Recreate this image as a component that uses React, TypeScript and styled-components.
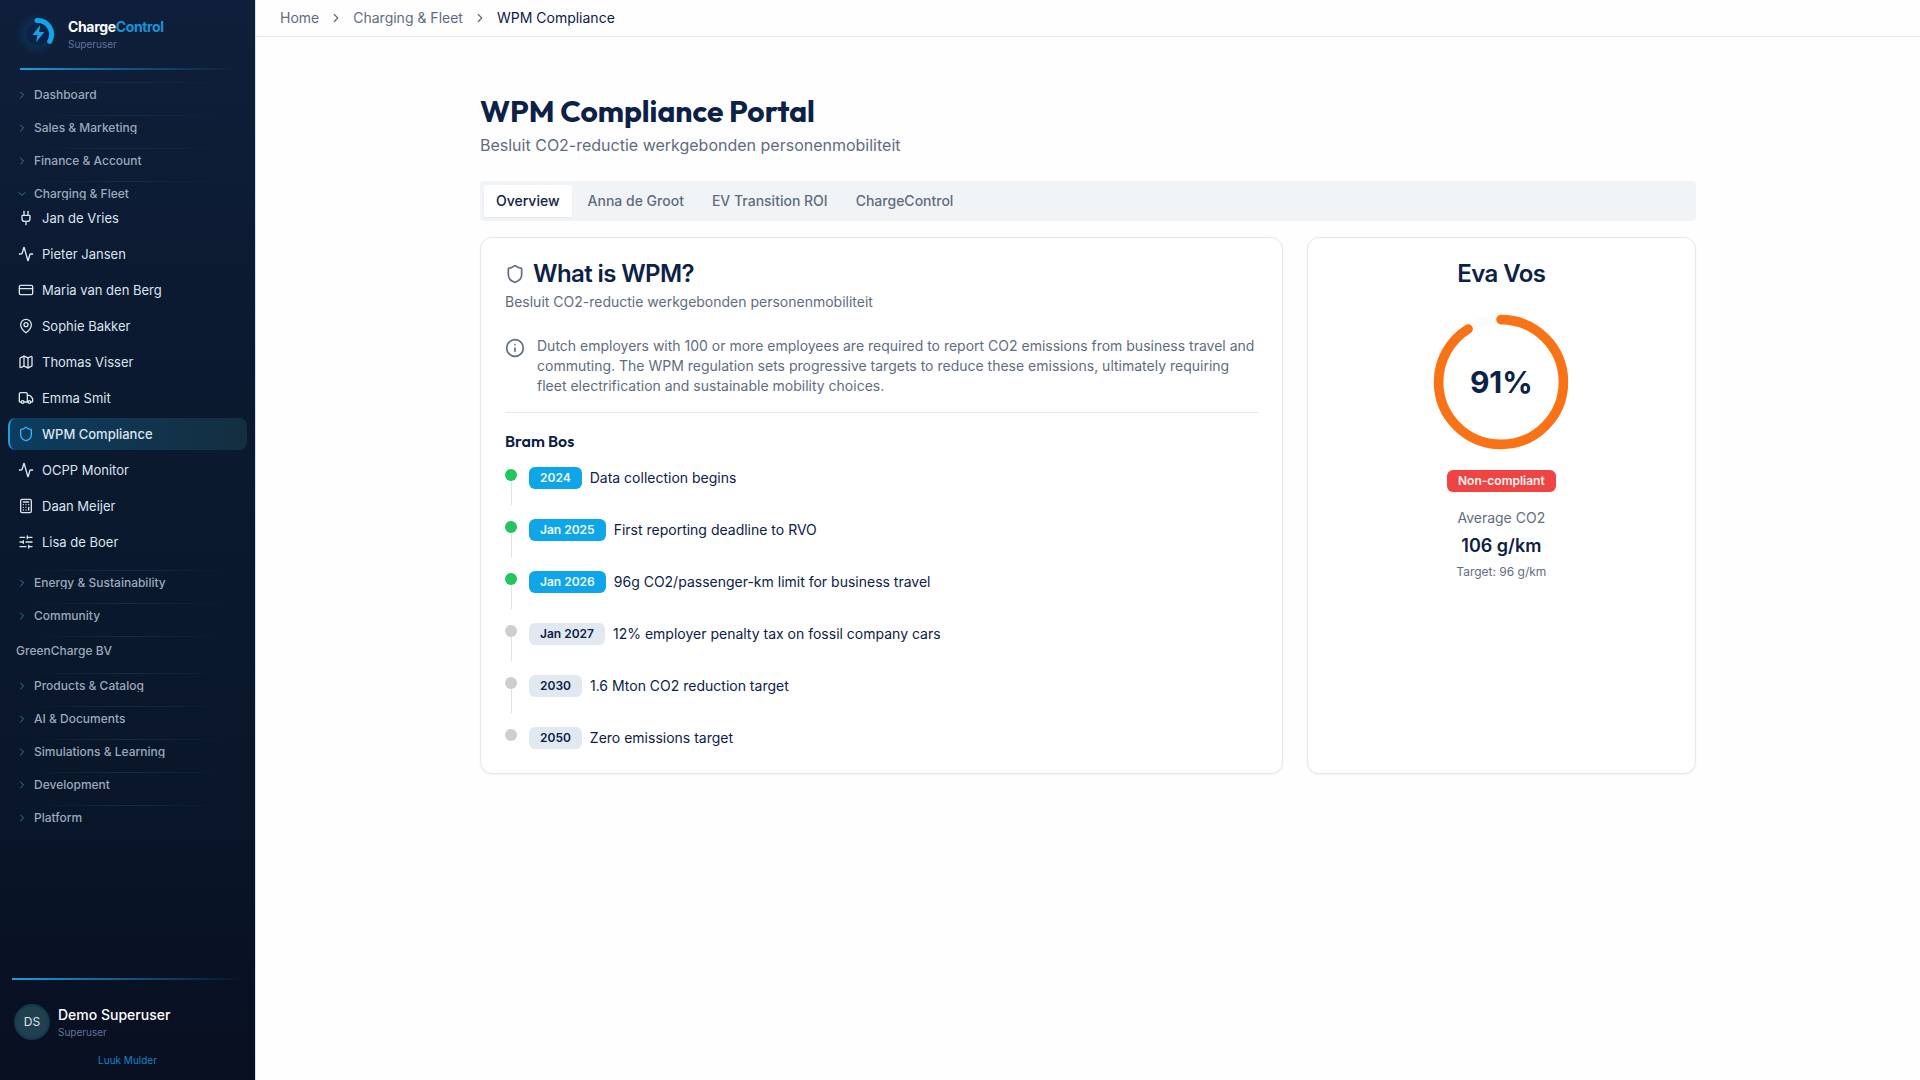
import React from "react";
import styled, { createGlobalStyle, css } from "styled-components";
import {
  Activity,
  Calculator,
  ChevronDown,
  ChevronRight,
  CreditCard,
  Info,
  Map as MapIcon,
  MapPin,
  Plug,
  Shield,
  SlidersHorizontal,
  Truck,
  type LucideIcon,
} from "lucide-react";

const color = {
  ink: "#0c2146",
  muted: "#5f6c80",
  line: "#e3e8ec",
  panel: "#f0f4f7",
  brand: "#0ea5e9",
  green: "#22c55e",
  orange: "#f97316",
  red: "#ef4444",
};

const GlobalStyle = createGlobalStyle`
  *, *::before, *::after { box-sizing: border-box; }
  body {
    margin: 0;
    background: #fefefe;
    color: ${color.ink};
    font-family: Inter, "Liberation Sans", sans-serif;
    font-size: 14px;
    line-height: 20px;
  }
  h1, h2, h3, p, ul, ol { margin: 0; padding: 0; }
  ul, ol { list-style: none; }
  a { color: inherit; text-decoration: none; }
  button { font: inherit; color: inherit; border: 0; background: none; padding: 0; cursor: pointer; }
`;

const headingFont = `Outfit, Lato, sans-serif`;

const Shell = styled.div`
  display: grid;
  grid-template-columns: 256px minmax(0, 1fr);
  min-height: 100vh;
`;

/* Sidebar */

const Sidebar = styled.aside`
  position: sticky;
  top: 0;
  height: 100vh;
  display: flex;
  flex-direction: column;
  background: linear-gradient(180deg, #0f1f3b 0%, #0b1a30 30%, #0a172b 70%, #080f21 100%);
  border-right: 1px solid #d3dfea;
  color: #d5dde8;
`;

const Brand = styled.a`
  display: flex;
  align-items: center;
  gap: 8px;
  height: 68px;
  padding: 0 16px;
`;

const BrandName = styled.span`
  display: block;
  font-size: 14px;
  line-height: 20px;
  font-weight: 700;
  letter-spacing: -0.025em;
  color: #ffffff;

  em { font-style: normal; color: #1793d6; }
`;

const Role = styled.span`
  display: block;
  font-size: 10px;
  line-height: 14px;
  color: #5f7599;
`;

const GlowLine = styled.div<{ $inset: number }>`
  flex: none;
  height: 2px;
  margin: 0 ${(p) => p.$inset}px;
  background: linear-gradient(90deg, #1a9fe0, #14567f 50%, transparent);
`;

const Nav = styled.nav`
  flex: 1;
  min-height: 0;
  overflow: hidden;
  padding: 12px 8px 0;
`;

const Section = styled.section`
  padding-bottom: 12px;

  &::before {
    content: "";
    display: block;
    height: 1px;
    margin: 0 8px 4px;
    background: linear-gradient(90deg, transparent 5%, #132c44 50%, transparent 95%);
  }
`;

const SectionToggle = styled.button`
  display: flex;
  align-items: center;
  gap: 6px;
  width: 100%;
  height: 16px;
  padding: 0 8px;
  font-size: 12px;
  line-height: 12px;
  font-weight: 500;
  color: #9ba9bb;

  svg { flex: none; color: #2a8099; }
  span { overflow: hidden; }
`;

const SectionLabel = styled.p`
  padding: 0 8px;
  font-size: 12px;
  line-height: 20px;
  font-weight: 500;
  color: #9ba9bb;
`;

const ItemList = styled.ul`
  display: grid;
  gap: 4px;
`;

const Item = styled.a<{ $active?: boolean }>`
  display: flex;
  align-items: center;
  gap: 8px;
  height: 32px;
  padding: 0 8px;
  border-left: 2px solid transparent;
  border-radius: 8px;
  font-size: 13px;
  line-height: 21px;
  color: #dbe4ee;

  ${(p) =>
    p.$active &&
    css`
      border-left-color: #1aa0de;
      background: linear-gradient(90deg, #0c3d60, #142e40);
      font-weight: 500;
      svg { color: #38b2f0; }
    `}
`;

const Account = styled.div`
  display: flex;
  align-items: center;
  gap: 8px;
  padding: 24px 14px 0;
`;

const Avatar = styled.span`
  display: grid;
  place-items: center;
  width: 36px;
  height: 36px;
  border: 2px solid #10394f;
  border-radius: 50%;
  background: #21404f;
  font-size: 12px;
  color: #d5e4ee;
`;

const AccountName = styled.span`
  display: block;
  font-size: 14px;
  line-height: 20px;
  font-weight: 500;
  color: #ffffff;
`;

const FooterLink = styled.a`
  display: block;
  padding: 12px 0;
  text-align: center;
  font-size: 10px;
  line-height: 16px;
  color: #1585c4;
`;

/* Page */

const Topbar = styled.nav`
  height: 37px;
  padding: 0 24px;
  border-bottom: 1px solid ${color.line};
  display: flex;
  align-items: center;
`;

const Crumbs = styled.ol`
  display: flex;
  align-items: center;
  gap: 10px;
  color: ${color.muted};

  li { display: flex; align-items: center; gap: 10px; }
  [aria-current] { color: ${color.ink}; }
`;

const Page = styled.main`
  max-width: 1280px;
  margin: 0 auto;
  padding: 56px 32px;
`;

const Title = styled.h1`
  font-family: ${headingFont};
  font-size: 30px;
  line-height: 36px;
  font-weight: 700;
`;

const Lead = styled.p`
  margin-top: 4px;
  font-size: 16px;
  line-height: 24px;
  color: ${color.muted};
`;

const Tabs = styled.div`
  display: flex;
  gap: 4px;
  margin: 24px 0 16px;
  padding: 4px;
  border-radius: 4px;
  background: ${color.panel};
`;

const Tab = styled.button<{ $active?: boolean }>`
  height: 32px;
  padding: 0 12px;
  border-radius: 2px;
  font-weight: 500;
  color: ${(p) => (p.$active ? color.ink : color.muted)};
  background: ${(p) => (p.$active ? "#ffffff" : "transparent")};
  box-shadow: ${(p) => (p.$active ? "0 1px 2px rgba(15, 35, 70, 0.06)" : "none")};
`;

const Columns = styled.div`
  display: grid;
  grid-template-columns: repeat(3, minmax(0, 1fr));
  gap: 24px;
`;

const Card = styled.section<{ $span?: number; $centered?: boolean }>`
  grid-column: span ${(p) => p.$span ?? 1};
  padding: 24px;
  border: 1px solid ${color.line};
  border-radius: 12px;
  background: #ffffff;
  box-shadow: 0 1px 2px rgba(15, 35, 70, 0.06);
  ${(p) =>
    p.$centered &&
    css`
      display: flex;
      flex-direction: column;
      align-items: center;
    `}
`;

const CardTitle = styled.h2`
  display: flex;
  align-items: center;
  gap: 8px;
  font-size: 24px;
  line-height: 24px;
  font-weight: 600;
  letter-spacing: -0.025em;

  svg { color: ${color.muted}; }
`;

const CardNote = styled.p`
  margin-top: 6px;
  color: ${color.muted};
`;

const Explain = styled.div`
  display: flex;
  gap: 12px;
  margin-top: 24px;
  padding-bottom: 16px;
  border-bottom: 1px solid ${color.line};
  color: ${color.muted};

  svg { flex: none; margin-top: 2px; }
`;

const Subheading = styled.h3`
  margin: 16px 0 12px;
  font-family: ${headingFont};
  font-size: 16px;
  line-height: 24px;
  font-weight: 600;
`;

const Timeline = styled.ol`
  display: grid;
  gap: 12px;
`;

const Milestone = styled.li`
  display: flex;
  gap: 12px;
`;

const Rail = styled.span<{ $done: boolean }>`
  display: flex;
  flex-direction: column;
  align-items: center;
  padding-top: 4px;

  &::before {
    content: "";
    width: 12px;
    height: 12px;
    border-radius: 50%;
    background: ${(p) => (p.$done ? color.green : "#cbcfd1")};
  }

  ${Milestone}:not(:last-child) &::after {
    content: "";
    width: 1px;
    height: 24px;
    background: #dfe3e6;
  }
`;

const MilestoneBody = styled.div`
  display: flex;
  align-items: center;
  gap: 8px;
  height: 22px;
  margin-top: 2px;
`;

const tones = {
  brand: [color.brand, "#f0faff"],
  plain: ["#e2e8f0", color.ink],
  danger: [color.red, "#fff5f5"],
};

const Badge = styled.span<{ $tone: keyof typeof tones }>`
  padding: 3px 11px;
  border-radius: 6px;
  font-size: 12px;
  line-height: 16px;
  font-weight: 600;
  background: ${(p) => tones[p.$tone][0]};
  color: ${(p) => tones[p.$tone][1]};
`;

const Gauge = styled.div`
  display: grid;
  place-items: center;
  margin: 24px 0 16px;

  > * { grid-area: 1 / 1; }
`;

const GaugeValue = styled.span`
  font-size: 30px;
  line-height: 36px;
  font-weight: 700;
`;

const Stats = styled.div`
  display: grid;
  gap: 4px;
  margin-top: 16px;
  text-align: center;
  color: ${color.muted};

  strong { font-size: 18px; line-height: 28px; font-weight: 600; color: ${color.ink}; }
  small { font-size: 12px; line-height: 16px; }
`;

const items: { label: string; icon: LucideIcon; active?: boolean }[] = [
  { label: "Jan de Vries", icon: Plug },
  { label: "Pieter Jansen", icon: Activity },
  { label: "Maria van den Berg", icon: CreditCard },
  { label: "Sophie Bakker", icon: MapPin },
  { label: "Thomas Visser", icon: MapIcon },
  { label: "Emma Smit", icon: Truck },
  { label: "WPM Compliance", icon: Shield, active: true },
  { label: "OCPP Monitor", icon: Activity },
  { label: "Daan Meijer", icon: Calculator },
  { label: "Lisa de Boer", icon: SlidersHorizontal },
];

const milestones = [
  { date: "2024", text: "Data collection begins", done: true },
  { date: "Jan 2025", text: "First reporting deadline to RVO", done: true },
  { date: "Jan 2026", text: "96g CO2/passenger-km limit for business travel", done: true },
  { date: "Jan 2027", text: "12% employer penalty tax on fossil company cars", done: false },
  { date: "2030", text: "1.6 Mton CO2 reduction target", done: false },
  { date: "2050", text: "Zero emissions target", done: false },
];

const tabs = ["Overview", "Anna de Groot", "EV Transition ROI", "ChargeControl"];

function Logo() {
  return (
    <svg width="44" height="44" viewBox="0 0 44 44" aria-hidden="true">
      <defs>
        <radialGradient id="logoGlow">
          <stop offset="0.6" stopColor="#0b3358" />
          <stop offset="1" stopColor="#0b3358" stopOpacity="0" />
        </radialGradient>
      </defs>
      <circle cx="21" cy="22" r="21" fill="url(#logoGlow)" opacity="0.7" />
      <circle cx="21.5" cy="22" r="11" fill="#0c2347" />
      <path d="M21 8.4 A14 14 0 0 1 33.7 29.4" fill="none" stroke="#14a4ec" strokeWidth="5" strokeLinecap="round" />
      <path d="M24.2 13 L16.5 23 H21.4 L20.2 30.2 L28.3 20 H23.2 Z" fill="#1ea0e6" />
    </svg>
  );
}

function NavSection({ label, open, children }: { label: string; open?: boolean; children?: React.ReactNode }) {
  const Chevron = open ? ChevronDown : ChevronRight;
  return (
    <Section>
      <SectionToggle type="button" aria-expanded={!!open}>
        <Chevron size={12} />
        <span>{label}</span>
      </SectionToggle>
      {children}
    </Section>
  );
}

function ProgressRing({ percent }: { percent: number }) {
  const length = 2 * Math.PI * 52;
  return (
    <Gauge>
      <svg width="144" height="144" viewBox="0 0 120 120" aria-hidden="true">
        <g fill="none" strokeWidth="8" transform="rotate(-90 60 60)">
          <circle cx="60" cy="60" r="52" stroke="#fafbfb" />
          <circle
            cx="60"
            cy="60"
            r="52"
            stroke={color.orange}
            strokeLinecap="round"
            strokeDasharray={`${(length * percent) / 100} ${length}`}
          />
        </g>
      </svg>
      <GaugeValue>{percent}%</GaugeValue>
    </Gauge>
  );
}

export default function App() {
  return (
    <>
      <GlobalStyle />
      <Shell>
        <Sidebar>
          <Brand href="#home">
            <Logo />
            <span>
              <BrandName>
                Charge<em>Control</em>
              </BrandName>
              <Role>Superuser</Role>
            </span>
          </Brand>
          <GlowLine $inset={20} />
          <Nav aria-label="Main">
            <NavSection label="Dashboard" />
            <NavSection label="Sales & Marketing" />
            <NavSection label="Finance & Account" />
            <NavSection label="Charging & Fleet" open>
              <ItemList>
                {items.map(({ label, icon: Icon, active }) => (
                  <li key={label}>
                    <Item href="#page" $active={active} aria-current={active ? "page" : undefined}>
                      <Icon size={16} />
                      {label}
                    </Item>
                  </li>
                ))}
              </ItemList>
            </NavSection>
            <NavSection label="Energy & Sustainability" />
            <NavSection label="Community" />
            <Section>
              <SectionLabel>GreenCharge BV</SectionLabel>
            </Section>
            <NavSection label="Products & Catalog" />
            <NavSection label="AI & Documents" />
            <NavSection label="Simulations & Learning" />
            <NavSection label="Development" />
            <NavSection label="Platform" />
          </Nav>
          <GlowLine $inset={12} />
          <Account>
            <Avatar>DS</Avatar>
            <span>
              <AccountName>Demo Superuser</AccountName>
              <Role>Superuser</Role>
            </span>
          </Account>
          <FooterLink href="#luuk">Luuk Mulder</FooterLink>
        </Sidebar>

        <div>
          <Topbar aria-label="Breadcrumb">
            <Crumbs>
              <li>
                <a href="#home">Home</a>
                <ChevronRight size={14} />
              </li>
              <li>
                <a href="#fleet">Charging &amp; Fleet</a>
                <ChevronRight size={14} />
              </li>
              <li aria-current="page">WPM Compliance</li>
            </Crumbs>
          </Topbar>

          <Page>
            <Title>WPM Compliance Portal</Title>
            <Lead>Besluit CO2-reductie werkgebonden personenmobiliteit</Lead>

            <Tabs role="tablist">
              {tabs.map((tab, i) => (
                <Tab key={tab} type="button" role="tab" aria-selected={i === 0} $active={i === 0}>
                  {tab}
                </Tab>
              ))}
            </Tabs>

            <Columns>
              <Card $span={2}>
                <CardTitle>
                  <Shield size={20} />
                  What is WPM?
                </CardTitle>
                <CardNote>Besluit CO2-reductie werkgebonden personenmobiliteit</CardNote>
                <Explain>
                  <Info size={20} />
                  <p>
                    Dutch employers with 100 or more employees are required to report CO2 emissions from business
                    travel and commuting. The WPM regulation sets progressive targets to reduce these emissions,
                    ultimately requiring fleet electrification and sustainable mobility choices.
                  </p>
                </Explain>
                <Subheading>Bram Bos</Subheading>
                <Timeline>
                  {milestones.map(({ date, text, done }) => (
                    <Milestone key={date}>
                      <Rail $done={done} />
                      <MilestoneBody>
                        <Badge $tone={done ? "brand" : "plain"}>{date}</Badge>
                        <span>{text}</span>
                      </MilestoneBody>
                    </Milestone>
                  ))}
                </Timeline>
              </Card>

              <Card $centered>
                <CardTitle>Eva Vos</CardTitle>
                <ProgressRing percent={91} />
                <Badge $tone="danger">Non-compliant</Badge>
                <Stats>
                  <span>Average CO2</span>
                  <strong>106 g/km</strong>
                  <small>Target: 96 g/km</small>
                </Stats>
              </Card>
            </Columns>
          </Page>
        </div>
      </Shell>
    </>
  );
}
